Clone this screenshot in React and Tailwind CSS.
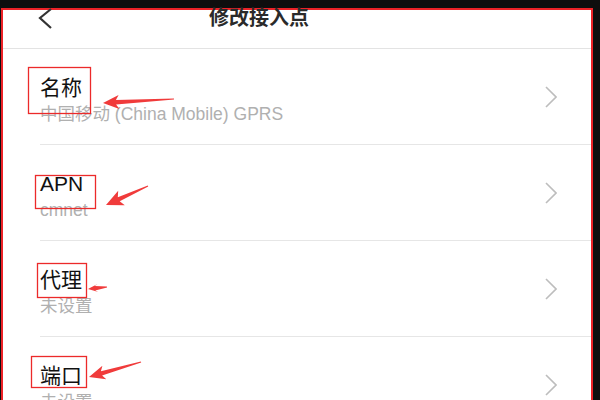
const rows = [
  { title: "名称", value: "中国移动 (China Mobile) GPRS" },
  { title: "APN", value: "cmnet" },
  { title: "代理", value: "未设置" },
  { title: "端口", value: "未设置" },
];

// red annotation boxes, page coordinates
const boxes = [
  { x: 28, y: 67, w: 62, h: 46 },
  { x: 35, y: 175, w: 60, h: 33 },
  { x: 37, y: 263, w: 49, h: 34 },
  { x: 31, y: 356, w: 55, h: 31 },
];

// arrows: tip, tail, head length, head half width
const arrows = [
  { tip: [103, 103], tail: [174, 99], L: 16, W: 7 },
  { tip: [106, 205], tail: [148, 186], L: 17, W: 8 },
  { tip: [88, 289], tail: [107, 287], L: 10, W: 4 },
  { tip: [89, 377], tail: [141, 362], L: 16, W: 7 },
];

const arrowPath = ({ tip, tail, L, W }) => {
  const dx = tail[0] - tip[0];
  const dy = tail[1] - tip[1];
  const len = Math.hypot(dx, dy);
  const ux = dx / len;
  const uy = dy / len;
  const nx = -uy;
  const ny = ux;
  const p = (a, b) => [tip[0] + ux * a + nx * b, tip[1] + uy * a + ny * b];
  const pts = [
    p(0, 0),
    p(L, -W),
    p(L - 3, -2.2),
    p(len, -0.6),
    p(len, 0.6),
    p(L - 3, 2.2),
    p(L, W),
  ];
  return "M" + pts.map((q) => q[0].toFixed(1) + " " + q[1].toFixed(1)).join(" L") + " Z";
};

const Chevron = () => (
  <svg width="12" height="22" viewBox="0 0 12 22" fill="none">
    <path d="M1 1 L11 11 L1 21" stroke="#bdbdbd" strokeWidth="1.6" />
  </svg>
);

export default function App() {
  return (
    <div
      className="relative w-[600px] h-[400px] overflow-hidden bg-[#0e0e0e]"
      style={{ fontFamily: '"Liberation Sans", "Noto Sans CJK SC", sans-serif' }}
    >
      <div className="ml-[1px] mt-[8px] w-[592px] h-[420px] border-2 border-[#ec2227] bg-white">
        <div className="relative h-[39px] border-b border-[#e3e3e3]">
          <div className="flex h-[16px] items-center pl-[206px]">
            <svg className="absolute left-[34px] top-[-2px]" width="16" height="22" viewBox="0 0 16 22" fill="none">
              <path d="M14 1 L3 10 L14 20" stroke="#333" strokeWidth="2.2" />
            </svg>
            <span className="text-[20px] leading-[20px] font-bold text-[#2a2a2a]">修改接入点</span>
          </div>
        </div>
        {rows.map((r) => (
          <div key={r.title} className="ml-[37px] h-[96px] border-b border-[#e6e6e6] flex items-center pr-[34px]">
            <div className="flex-1 pt-[8px]">
              <div className="text-[21px] leading-[26px] text-[#111]">{r.title}</div>
              <div className="text-[17.5px] leading-[24px] text-[#b0b0b0] mt-[1px]">{r.value}</div>
            </div>
            <Chevron />
          </div>
        ))}
      </div>
      <svg className="absolute left-0 top-0 pointer-events-none" width="600" height="400">
        {boxes.map((b, i) => (
          <rect key={i} x={b.x + 0.5} y={b.y + 0.5} width={b.w} height={b.h} fill="none" stroke="#ec2a2a" strokeWidth="1.3" />
        ))}
        {arrows.map((a, i) => (
          <path key={i} d={arrowPath(a)} fill="#f03b3b" />
        ))}
      </svg>
    </div>
  );
}
